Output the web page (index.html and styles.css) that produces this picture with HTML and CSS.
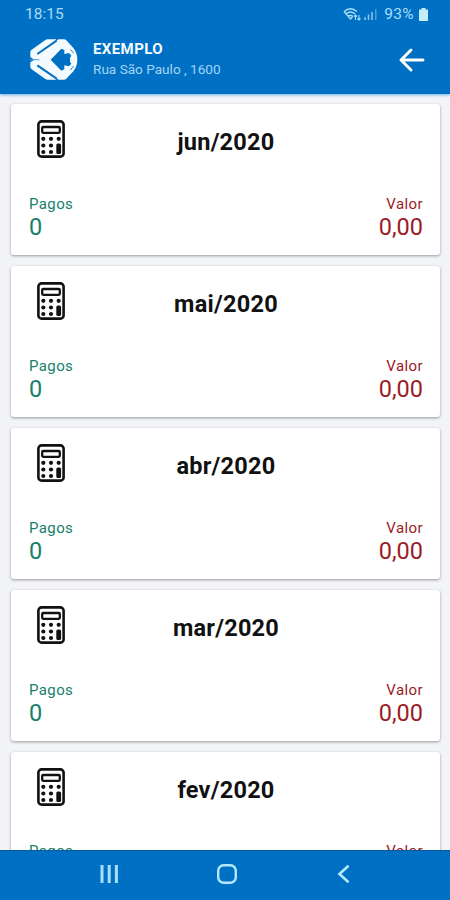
FILE: index.html
```html
<!DOCTYPE html>
<html lang="pt-BR">
<head>
<meta charset="utf-8">
<title>Exemplo</title>
<link rel="stylesheet" href="styles.css">
</head>
<body>
<svg width="0" height="0" class="defs">
  <symbol id="calc" viewBox="0 0 28 38">
    <rect x="1.4" y="1.4" width="25.2" height="35.2" rx="3.2" fill="#fff" stroke="#111" stroke-width="2.6"/>
    <rect x="5.2" y="7" width="17.6" height="5.8" rx="1" fill="none" stroke="#111" stroke-width="2.3"/>
    <g fill="#111">
      <circle cx="6.3" cy="18.8" r="2.1"/><circle cx="14" cy="18.8" r="2.1"/><circle cx="21.7" cy="18.8" r="2.1"/>
      <circle cx="6.3" cy="25.5" r="2.1"/><circle cx="14" cy="25.5" r="2.1"/>
      <circle cx="6.3" cy="32" r="2.1"/><circle cx="14" cy="32" r="2.1"/>
      <rect x="19.3" y="23.4" width="4.8" height="10.6" rx="1.6"/>
    </g>
  </symbol>
</svg>
<div class="screen">
  <header class="top">
    <div class="status">
      <span class="time">18:15</span>
      <svg class="wifi" width="18" height="15" viewBox="0 0 18 15" fill="none" stroke="#a9dcf5" stroke-width="1.4">
        <path d="M1 4.5Q7.5-1 14 4.5M3 7Q7.5 3 12 7M5 9.5Q7.5 7.5 10 9.5M1 4.5L7.5 12L9.5 9.8"/>
        <path d="M12.5 13V8M11 9.5L12.5 8L14 9.5M16 8V13M14.5 11.5L16 13L17.5 11.5" stroke-width="1.1"/>
      </svg>
      <svg class="signal" width="13" height="12" viewBox="0 0 13 12" fill="none" stroke="#8bc8ec" stroke-width="1.5">
        <path d="M1 12V9M4.5 12V6.5M8 12V4"/><path d="M11.8 12V1" opacity=".55"/>
      </svg>
      <span class="percent">93%</span>
      <svg class="battery" width="9" height="13" viewBox="0 0 9 13" fill="#c5ecfb"><path d="M2.5 0H6.5V1.5H9V13H0V1.5H2.5Z"/></svg>
    </div>
    <div class="bar">
      <svg class="logo" width="50" height="43" viewBox="15 9 150 129">
        <path fill="#f4fbff" d="M19 50Q19 47 23 44L64 15Q67 13 71 13H97L92 21L104 13H120Q124 13 127 16L149 40Q160 56 160 74Q160 92 149 108L127 131Q124 134 120 134H104L92 126L97 134H71Q67 134 64 132L23 103Q19 100 19 97V82L31 74L19 66Z"/>
        <path fill="#0070c5" d="M80 74L112 41L121 45V57L135 54L142 62L138 68V80L142 86L135 94L121 91V103L112 107Z"/>
        <path fill="none" stroke="#0070c5" stroke-width="6" d="M40 57L98 17M40 91L98 131"/>
        <path fill="none" stroke="#4b9fdd" stroke-width="3" d="M18 74H46"/>
        <path fill="none" stroke="#0070c5" stroke-width="2.5" d="M139 43L149 55M139 105L149 93"/>
      </svg>
      <div class="who">
        <strong>EXEMPLO</strong>
        <span>Rua São Paulo , 1600</span>
      </div>
      <svg class="back" width="28" height="26" viewBox="0 0 28 26" fill="none" stroke="#fff" stroke-width="2.9" stroke-linecap="round" stroke-linejoin="round"><path d="M25 13H3M13 3L3 13L13 23"/></svg>
    </div>
  </header>
  <main class="list">
    <article class="card"><svg class="calc"><use href="#calc"/></svg><h2>jun/2020</h2><div class="paid"><small>Pagos</small><b>0</b></div><div class="value"><small>Valor</small><b>0,00</b></div></article>
    <article class="card"><svg class="calc"><use href="#calc"/></svg><h2>mai/2020</h2><div class="paid"><small>Pagos</small><b>0</b></div><div class="value"><small>Valor</small><b>0,00</b></div></article>
    <article class="card"><svg class="calc"><use href="#calc"/></svg><h2>abr/2020</h2><div class="paid"><small>Pagos</small><b>0</b></div><div class="value"><small>Valor</small><b>0,00</b></div></article>
    <article class="card"><svg class="calc"><use href="#calc"/></svg><h2>mar/2020</h2><div class="paid"><small>Pagos</small><b>0</b></div><div class="value"><small>Valor</small><b>0,00</b></div></article>
    <article class="card"><svg class="calc"><use href="#calc"/></svg><h2>fev/2020</h2><div class="paid"><small>Pagos</small><b>0</b></div><div class="value"><small>Valor</small><b>0,00</b></div></article>
  </main>
  <nav class="nav">
    <svg width="20" height="20" viewBox="0 0 20 20" stroke="#a9e0fa" stroke-width="3"><path d="M3 1V19M10.2 1V19M17.4 1V19"/></svg>
    <svg width="20" height="20" viewBox="0 0 20 20" fill="none" stroke="#b5e8fb" stroke-width="2.4"><rect x="1.2" y="1.2" width="17.6" height="17.6" rx="5.5"/></svg>
    <svg width="20" height="20" viewBox="0 0 20 20" fill="none" stroke="#b5e8fb" stroke-width="2.6"><path d="M14.5 1.8L5.5 10L14.5 18.2"/></svg>
  </nav>
</div>
</body>
</html>
```
FILE: styles.css
```css
* { box-sizing: border-box; }
body { margin: 0; font-family: Roboto, "Liberation Sans", sans-serif; }
.defs { display: block; }
.screen { width: 450px; height: 900px; display: flex; flex-direction: column; overflow: hidden; background: #f2f4f8; margin: 0; }
.top { height: 94px; flex: none; background: #0070c5; box-shadow: 0 1px 3px #69ade0; z-index: 1; }
.status { height: 28px; display: flex; align-items: center; padding: 0 22px 0 25px; color: #a9dcf5; font-size: 15.5px; }
.time { margin-right: auto; }
.wifi { margin-right: 3px; margin-left: -3px; }
.signal { margin-right: 7px; }
.percent { margin-right: 5px; font-size: 15.5px; letter-spacing: .3px; }
.bar { height: 66px; display: flex; align-items: center; padding: 0 24px 3px 29px; }
.who { display: flex; flex-direction: column; margin: 0 auto 0 14px; }
.who strong { font-size: 15px; line-height: 20px; letter-spacing: .4px; color: #f2fbff; }
.who span { font-size: 13.6px; line-height: 21px; color: #a2d6f4; }
.list { flex: 1; min-height: 0; overflow: hidden; padding: 10.4px 10px 0 11px; display: flex; flex-direction: column; gap: 11px; }
.card { flex: none; height: 150.8px; background: #fff; border-radius: 3px; box-shadow: 0 1px 3px rgba(0, 0, 0, .38); padding: 16px 17px 0 18px; display: grid; grid-template-columns: 1fr auto 1fr; grid-template-rows: 73.8px auto; }
.calc { width: 28px; height: 38px; margin-left: 8px; }
.card h2 { margin: 8px 0 0; font-size: 23.5px; line-height: 28px; font-weight: 700; letter-spacing: .25px; color: #111; }
.paid, .value { display: flex; flex-direction: column; }
.paid { grid-column: 1; color: #16806c; }
.value { grid-column: 3; text-align: right; color: #9b1c26; }
.card small { font-size: 15px; line-height: 20px; letter-spacing: .4px; }
.card b { font-size: 23.5px; line-height: 27px; font-weight: 400; }
.nav { height: 50px; flex: none; background: #0070c5; border-top: 1px solid #075999; display: flex; justify-content: space-between; align-items: center; padding: 0 96px 3px 99px; z-index: 1; }
```
